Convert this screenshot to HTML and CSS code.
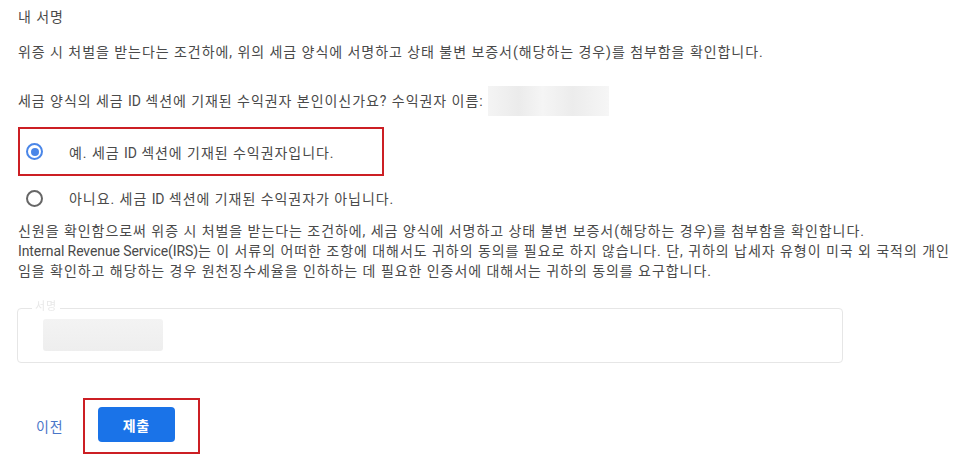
FILE: index.html
```html
<!DOCTYPE html>
<html lang="ko">
<head>
    <meta charset="UTF-8">
    <meta name="viewport" content="width=device-width, initial-scale=1.0">
    <title>내 서명</title>
    <link rel="stylesheet" href="styles.css">
</head>
<body>
    <div class="sign-container">
        <h2 class="title">내 서명</h2>
        <p class="intro">위증 시 처벌을 받는다는 조건하에, 위의 세금 양식에 서명하고 상태 불변 보증서(해당하는 경우)를 첨부함을 확인합니다.</p>
        <p class="question">세금 양식의 세금 <span class="latin">ID</span> 섹션에 기재된 수익권자 본인이신가요? 수익권자 이름: <span class="name-blur"></span></p>

        <div class="choices">
            <label class="choice highlight">
                <span class="radio checked"></span>
                <span>예. 세금 <span class="latin">ID</span> 섹션에 기재된 수익권자입니다.</span>
            </label>
            <label class="choice">
                <span class="radio"></span>
                <span>아니요. 세금 <span class="latin">ID</span> 섹션에 기재된 수익권자가 아닙니다.</span>
            </label>
        </div>

        <p class="notice">신원을 확인함으로써 위증 시 처벌을 받는다는 조건하에, 세금 양식에 서명하고 상태 불변 보증서(해당하는 경우)를 첨부함을 확인합니다.<br><span class="latin">Internal Revenue Service(IRS)</span>는 이 서류의 어떠한 조항에 대해서도 귀하의 동의를 필요로 하지 않습니다. 단, 귀하의 납세자 유형이 미국 외 국적의 개인<br>임을 확인하고 해당하는 경우 원천징수세율을 인하하는 데 필요한 인증서에 대해서는 귀하의 동의를 요구합니다.</p>

        <div class="sign-field">
            <span class="field-label">서명</span>
            <span class="value-blur"></span>
        </div>

        <div class="actions">
            <a href="#" class="prev-link">이전</a>
            <div class="submit-wrap">
                <button type="button" class="submit-btn">제출</button>
            </div>
        </div>
    </div>
</body>
</html>
```

FILE: styles.css
```css
body {
    font-family: Roboto, "Noto Sans CJK KR", sans-serif;
    margin: 0;
    padding: 0;
    background-color: #fff;
    color: #4a4a4a;
    font-size: 14px;
    letter-spacing: 0.95px;
}
.latin {
    letter-spacing: -0.1px;
}
.sign-container {
    padding: 8px 0 0 18px;
    width: 955px;
}
.title {
    font-size: 14px;
    font-weight: normal;
    margin: 0;
    line-height: 18px;
}
.intro {
    margin: 17px 0 0;
    line-height: 18px;
}
.question {
    margin: 25px 0 0;
    line-height: 30px;
    display: flex;
    align-items: center;
    white-space: pre;
}
.name-blur {
    display: inline-block;
    width: 121px;
    height: 30px;
    margin-left: 0;
    background: linear-gradient(90deg, #f4f4f4 0%, #ebebeb 25%, #f5f5f5 45%, #ececec 70%, #f6f6f6 100%);
}
.choices {
    margin-top: 11px;
}
.choice {
    display: flex;
    align-items: center;
    height: 40px;
    width: 356px;
    padding-left: 6px;
    border: 2px solid transparent;
    white-space: nowrap;
    cursor: pointer;
}
.choice.highlight {
    height: 45px;
    border-color: #cc1f24;
}
.radio {
    width: 13px;
    height: 13px;
    border: 2px solid #666;
    border-radius: 50%;
    margin-right: 26px;
    position: relative;
    flex-shrink: 0;
}
.radio.checked {
    border-color: #4a86e8;
}
.radio.checked::after {
    content: "";
    position: absolute;
    left: 2.5px;
    top: 2.5px;
    width: 8px;
    height: 8px;
    border-radius: 50%;
    background-color: #4a86e8;
}
.notice {
    margin: 1px 0 0;
    line-height: 20px;
    white-space: nowrap;
}
.sign-field {
    position: relative;
    margin-top: 27px;
    margin-left: -1px;
    width: 824px;
    height: 53px;
    border: 1px solid #e6e6e6;
    border-radius: 4px;
}
.field-label {
    position: absolute;
    left: 14px;
    top: -12px;
    font-size: 11px;
    color: #e8e8e8;
    background-color: #fff;
    padding: 0 3px;
    filter: blur(0.6px);
}
.value-blur {
    position: absolute;
    left: 25px;
    top: 10px;
    width: 120px;
    height: 32px;
    background: linear-gradient(180deg, #f3f3f3, #eeeeee);
    border-radius: 3px;
}
.actions {
    display: flex;
    align-items: center;
    margin-top: 35px;
}
.prev-link {
    color: #4a76c8;
    text-decoration: none;
    margin-left: 18px;
    margin-right: 19px;
}
.submit-wrap {
    border: 2px solid #cc1f24;
    padding: 7px 23px 10px 13px;
}
.submit-btn {
    width: 77px;
    height: 35px;
    background-color: #1a73e8;
    color: #fff;
    border: none;
    border-radius: 4px;
    font-size: 14px;
    font-weight: bold;
    letter-spacing: 0.5px;
    font-family: Roboto, "Noto Sans CJK KR", sans-serif;
    cursor: pointer;
}
```
